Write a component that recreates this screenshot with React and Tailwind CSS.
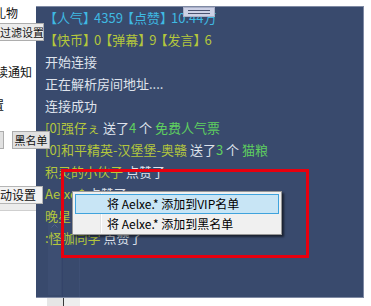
import React from "react";

const FONT = { fontFamily: '"Noto Sans CJK SC", "Microsoft YaHei", sans-serif' };

function Line({ children }) {
  return <div className="h-[22px] leading-[22px] whitespace-nowrap">{children}</div>;
}

const Y = ({ children }) => <span className="text-[#b4c73c]">{children}</span>;
const W = ({ children }) => <span className="text-[#dfe3ec]">{children}</span>;
const G = ({ children }) => <span className="text-[#5fd05f]">{children}</span>;
const C = ({ children }) => <span className="text-[#3fb9e2]">{children}</span>;
const O = ({ first }) => <span className={first ? "ml-[-1px]" : "ml-[-2px]"}>【</span>;
const E = () => <span className="mr-[-2px]">】</span>;

export default function App() {
  return (
    <div className="relative w-[371px] h-[306px] overflow-hidden bg-white flex flex-col" style={FONT}>
      {/* form behind / around */}
      <div className="h-[297px] flex flex-row">
        <div className="relative z-10 w-[52px] flex flex-col text-[12px] text-[#111] leading-[14px]">
          <div className="h-[23px] pt-[6px] ml-[-6px] whitespace-nowrap">礼物</div>
          <div className="h-[18px] w-[49px] ml-[-5px] bg-[#ececec] border border-[#adadad] flex items-center pl-[4px] whitespace-nowrap overflow-hidden text-[11px]">
            过滤设置
          </div>
          <div className="h-[24px]" />
          <div className="h-[14px] ml-[-4px] whitespace-nowrap">读通知</div>
          <div className="h-[19px]" />
          <div className="h-[14px] ml-[-8px] whitespace-nowrap">置</div>
          <div className="h-[19px]" />
          <div className="h-[18px] flex flex-row text-[11px]">
            <div className="w-[14px] ml-[-10px] bg-[#e1e1e1] border border-[#adadad]" />
            <div className="ml-[8px] w-[38px] bg-[#e1e1e1] border border-[#adadad] flex items-center justify-center whitespace-nowrap">
              黑名单
            </div>
          </div>
          <div className="h-[37px]" />
          <div className="h-[18px] w-[63px] ml-[-20px] bg-[#f3f3f3] border border-[#b5b5b5] flex items-center pl-[19px] whitespace-nowrap overflow-hidden text-[12px]">
            动设置
          </div>
          <div className="h-[7px] w-[36px] bg-[#ececec] border-b border-[#cfcfcf]" />
        </div>
      </div>
      <div className="h-[9px] flex flex-row">
        <div className="w-[47px]" />
        <div className="w-[16px] bg-[#e6e6e6]" />
        <div className="w-[1px] bg-[#3a3a3a]" />
        <div className="w-[16px] bg-[#eeeeee]" />
      </div>

      {/* dark log panel */}
      <div className="absolute left-[36px] top-[6px] w-[328px] h-[292px] bg-[#394a6d] border-t border-r border-b border-[#7f8aa4] pl-[9px] text-[13px] overflow-hidden">
        {/* ghost scrollbar */}
        <div className="absolute left-[12px] top-[214px] w-[13px] h-[74px] bg-[#3d4e72] flex justify-center pt-[3px]">
          <svg width="7" height="4" viewBox="0 0 7 4">
            <path d="M0.5 3.5 L3.5 0.5 L6.5 3.5" fill="none" stroke="#50628a" strokeWidth="1" />
          </svg>
        </div>
        <div className="absolute left-[26px] top-[250px] w-[1px] h-[42px] bg-[#34446a]" />
        <div className="absolute left-[43px] top-[250px] w-[1px] h-[42px] bg-[#3e4f74]" />
        <div className="relative">
          <Line><C><O first />人气<E />4359<O />点赞<E />10.44万</C></Line>
          <Line><Y><O first />快币<E />0<O />弹幕<E />9<O />发言<E />6</Y></Line>
          <Line><W>开始连接</W></Line>
          <Line><W>正在解析房间地址....</W></Line>
          <Line><W>连接成功</W></Line>
          <Line><Y>[0]强仔ぇ</Y><W> 送了</W><G>4</G><W> 个 </W><G>免费人气票</G></Line>
          <Line><Y>[0]和平精英-汉堡堡-奥赣</Y><W> 送了</W><G>3</G><W> 个 </W><G>猫粮</G></Line>
          <Line><Y>积灵的小伙子</Y><W> 点赞了</W></Line>
          <Line><Y>Aelxe.*</Y><W> 点赞了</W></Line>
          <Line><Y>晚星</Y><W> 点赞了</W></Line>
          <Line><Y>:怪咖同学</Y><W> 点赞了</W></Line>
        </div>
      </div>

      {/* splitter grip */}
      <div className="absolute left-[183px] top-[7px] w-[32px] h-[10px] bg-[#cdd1e6] border border-[#aab0c8] flex flex-col items-center justify-center gap-[2px]">
        <div className="w-[22px] h-[1px] bg-[#4a5270]" />
        <div className="w-[22px] h-[1px] bg-[#4a5270]" />
      </div>

      {/* red highlight box */}
      <div className="absolute left-[61px] top-[169px] w-[248px] h-[89px] border-[3px] border-[#e8000e]" />

      {/* context menu */}
      <div className="absolute left-[72px] top-[191px] w-[210px] h-[44px] bg-[#f0f0f0] border border-[#979797] p-[2px] shadow-[2px_2px_2px_rgba(0,0,0,0.55)] text-[12px] text-black">
        <div className="absolute left-[27px] top-[1px] bottom-[1px] w-[1px] bg-[#e2e2e2]" />
        <div className="absolute left-[28px] top-[1px] bottom-[1px] w-[1px] bg-white" />
        <div className="relative h-[20px] bg-[#c8e5f5] border border-[#3fa3dd] flex items-center pl-[31px] whitespace-nowrap">
          将 Aelxe.* 添加到VIP名单
        </div>
        <div className="relative h-[20px] flex items-center pl-[32px] whitespace-nowrap">
          将 Aelxe.* 添加到黑名单
        </div>
      </div>
    </div>
  );
}
